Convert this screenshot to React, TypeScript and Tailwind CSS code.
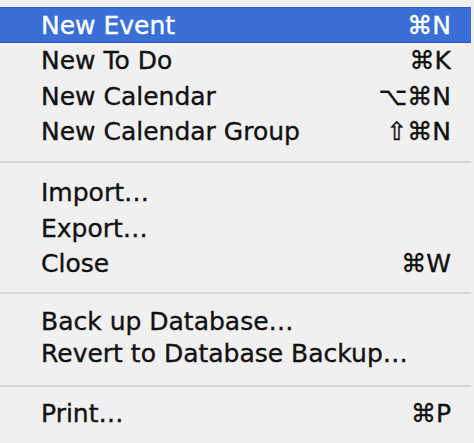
import React from "react";

type Item = { label: string; shortcut?: string; active?: boolean; h: string };

const sections: Item[][] = [
  [
    { label: "New Event", shortcut: "⌘N", active: true, h: "h-[36px]" },
    { label: "New To Do", shortcut: "⌘K", h: "h-[35px]" },
    { label: "New Calendar", shortcut: "⌥⌘N", h: "h-[36px]" },
    { label: "New Calendar Group", shortcut: "⇧⌘N", h: "h-[35px]" },
  ],
  [
    { label: "Import…", h: "h-[36px]" },
    { label: "Export…", h: "h-[36px]" },
    { label: "Close", shortcut: "⌘W", h: "h-[35px]" },
  ],
  [
    { label: "Back up Database…", h: "h-[32px]" },
    { label: "Revert to Database Backup…", h: "h-[32px]" },
  ],
  [{ label: "Print…", shortcut: "⌘P", h: "h-[32px]" }],
];

const sepMargins = ["mt-[12px] mb-[11px]", "mt-[11px] mb-[11px]", "mt-[16px] mb-[10px]"];

function MenuRow({ item }: { item: Item }) {
  return (
    <div
      className={[
        "flex items-center justify-between pl-[41px] leading-none",
        item.h,
        item.active
          ? "bg-[#3a6fd6] text-white border-t border-t-[#2d61cc] border-b border-b-[#2a56c2] mr-[3px] pr-[20px]"
          : "text-[#111111] pr-[23px]",
      ].join(" ")}
    >
      <span>{item.label}</span>
      {item.shortcut && <span>{item.shortcut}</span>}
    </div>
  );
}

export default function App() {
  return (
    <div
      className="w-[474px] h-[443px] bg-[#f0f0f0] pt-[7px] overflow-hidden text-[25px] [-webkit-text-stroke:0.35px_currentColor]"
      style={{ fontFamily: '"DejaVu Sans", "Lucida Grande", sans-serif' }}
    >
      {sections.map((section, i) => (
        <div key={i}>
          {section.map((item) => (
            <MenuRow key={item.label} item={item} />
          ))}
          {i < sections.length - 1 && (
            <div className={["h-[2px] bg-[#d6d6d6] mr-[3px]", sepMargins[i]].join(" ")} />
          )}
        </div>
      ))}
    </div>
  );
}
